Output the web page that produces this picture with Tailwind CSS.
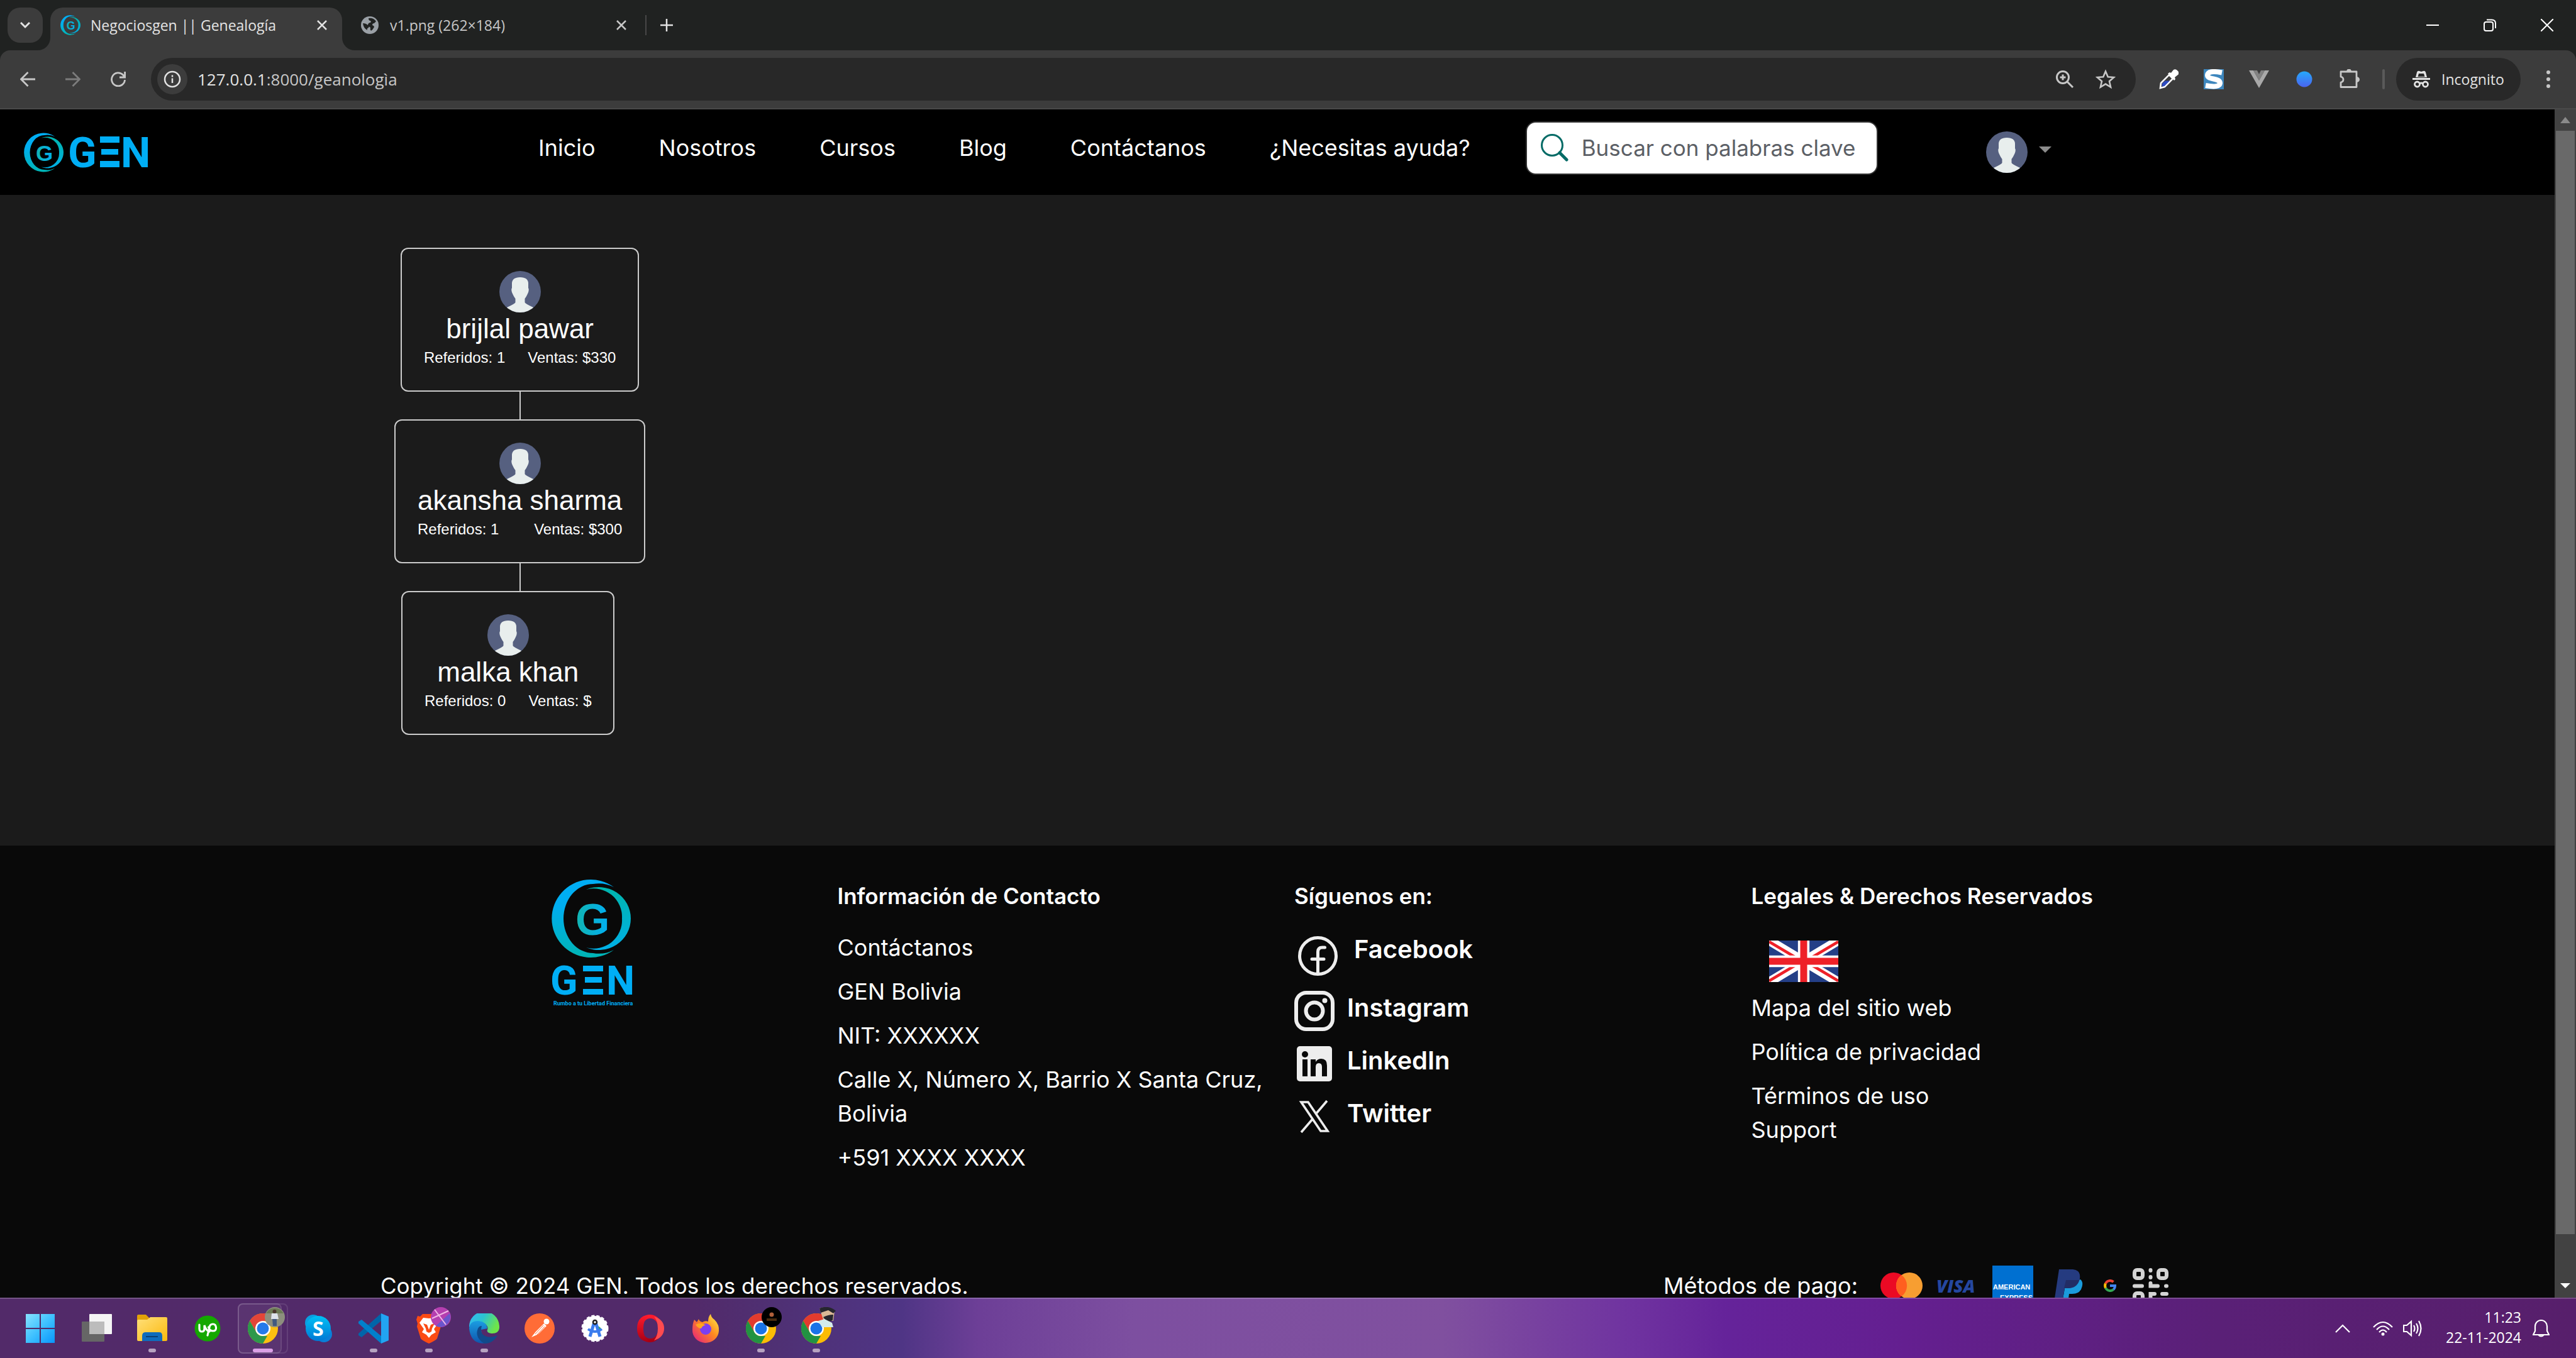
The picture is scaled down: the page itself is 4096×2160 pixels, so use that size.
<!DOCTYPE html>
<html lang="es">
<head>
<meta charset="utf-8">
<title>Negociosgen || Genealogía</title>
<script src="https://cdn.jsdelivr.net/npm/@tailwindcss/browser@4"></script>
</head>
<body class="flex h-screen flex-col overflow-hidden bg-[#202221] font-['Open_Sans',sans-serif] text-white">

<!-- shared symbols -->
<svg class="absolute size-0" aria-hidden="true">
  <defs>
    <linearGradient id="gA" x1="0" y1="0" x2="0" y2="1"><stop offset="0" stop-color="#00aef5"/><stop offset=".35" stop-color="#00aef0"/><stop offset="1" stop-color="#00b5b5"/></linearGradient>
    <linearGradient id="gB" x1="0" y1="0" x2="0" y2="1"><stop offset="0" stop-color="#00b5ad"/><stop offset="1" stop-color="#00b0e6"/></linearGradient>
    <linearGradient id="gC" x1="0" y1="0" x2="1" y2="0"><stop offset="0" stop-color="#12b5b0"/><stop offset="1" stop-color="#00aef5"/></linearGradient>
    <linearGradient id="gWin" gradientUnits="userSpaceOnUse" x1="0" y1="0" x2="48" y2="48"><stop offset="0" stop-color="#8be4ff"/><stop offset=".5" stop-color="#3fc1ff"/><stop offset="1" stop-color="#0693fb"/></linearGradient>
    <linearGradient id="gFold" x1="0" y1="0" x2="1" y2="1"><stop offset="0" stop-color="#ffe07a"/><stop offset="1" stop-color="#fbb90d"/></linearGradient>
    <linearGradient id="gSky" x1="0" y1="0" x2="0" y2="1"><stop offset="0" stop-color="#00c0f5"/><stop offset="1" stop-color="#0078d4"/></linearGradient>
    <linearGradient id="gEdge" x1="0" y1="0" x2="1" y2=".4"><stop offset="0" stop-color="#35b9f5"/><stop offset=".5" stop-color="#2cc3d0"/><stop offset="1" stop-color="#6ee54a"/></linearGradient>
    <linearGradient id="gEdge2" x1="0" y1="0" x2="0" y2="1"><stop offset="0" stop-color="#1b9de2"/><stop offset="1" stop-color="#0f55ac"/></linearGradient>
    <linearGradient id="gOp" x1="0" y1="0" x2="0" y2="1"><stop offset="0" stop-color="#ff1b2d"/><stop offset="1" stop-color="#a70014"/></linearGradient>
    <linearGradient id="gFx" x1="1" y1="0" x2="0" y2="1"><stop offset="0" stop-color="#fff44f"/><stop offset=".45" stop-color="#ff8a1f"/><stop offset="1" stop-color="#e31587"/></linearGradient>
    <linearGradient id="gBall" x1="0" y1="0" x2="0" y2="1"><stop offset="0" stop-color="#25a9fb"/><stop offset="1" stop-color="#4a63f0"/></linearGradient>
    <clipPath id="avClip"><circle cx="33" cy="33" r="33"/></clipPath>
    <symbol id="avatar" viewBox="0 0 66 66">
      <circle cx="33" cy="33" r="33" fill="#566080"/>
      <path clip-path="url(#avClip)" fill="#e8eeed" d="M20 20Q20 10 33 10T46 20V27Q47.500 29 46 34Q43 41 40.500 44V50Q41 52 54 58L58 66H8L12 58Q25 52 25.500 50V44Q23 41 20 34Q18.500 29 20 27Z"/>
    </symbol>
    <symbol id="emblem" viewBox="0 0 126 126">
      <path fill="url(#gA)" d="M99 13A62 62 0 1 0 99 113A54 56 0 0 1 66 118A47 55 0 0 1 66 8A54 56 0 0 1 99 13Z"/>
      <path fill="url(#gB)" d="M55 17A51 50 0 1 1 55 109A45 45 0 0 0 112 63A45 45 0 0 0 55 17Z"/>
      <text x="38" y="89" font-family="Liberation Sans, sans-serif" font-weight="700" font-size="70" fill="url(#gC)">G</text>
    </symbol>
    <symbol id="chrome" viewBox="0 0 48 48">
      <circle cx="24" cy="24" r="24" fill="#fbbc05"/>
      <path fill="#e23b2e" d="M3.200 12L13.600 30L24 12H44.800A24 24 0 0 0 3.200 12Z"/>
      <path fill="#229342" d="M3.200 12L13.600 30Q17 36 24 36H31L24 48A24 24 0 0 1 3.200 12Z"/>
      <circle cx="24" cy="24" r="12" fill="#fff"/><circle cx="24" cy="24" r="9.500" fill="#1a73e8"/>
    </symbol>
  </defs>
</svg>

<!-- tab strip -->
<header class="shrink-0">
  <div class="flex h-20 items-end bg-[#202221]">
    <button aria-label="Buscar pestañas" class="mb-3 ml-3 grid size-14 place-items-center rounded-[20px] bg-[#3c3c3c]"><svg class="h-3.5 w-4" viewBox="0 0 16 14" fill="none" stroke="#e3e3e3" stroke-width="3"><path d="M1 3l7 7 7-7"/></svg></button>
    <div class="relative ml-3 flex h-[68px] w-[464px] items-center rounded-t-[20px] bg-[#3c3c3c] pb-3 pl-4 pr-5">
      <svg class="absolute -left-5 bottom-0 size-5" viewBox="0 0 20 20"><path fill="#3c3c3c" d="M20 0V20H0A20 20 0 0 0 20 0Z"/></svg>
      <svg class="absolute -right-5 bottom-0 size-5" viewBox="0 0 20 20"><path fill="#3c3c3c" d="M0 0V20H20A20 20 0 0 1 0 0Z"/></svg>
      <svg class="size-8"><use href="#emblem"/></svg>
      <span class="ml-4 flex-1 whitespace-nowrap text-[23px] leading-8 text-[#e3e3e3]">Negociosgen || Genealogía</span>
      <button aria-label="Cerrar pestaña" class="grid size-6 place-items-center"><svg class="size-4" viewBox="0 0 16 16" stroke="#e3e3e3" stroke-width="2.500"><path d="M1 1L15 15M15 1L1 15"/></svg></button>
    </div>
    <div class="flex h-[68px] w-[482px] items-center pb-3 pl-7 pr-[26px]">
      <svg class="size-8" viewBox="0 0 32 32"><circle cx="16" cy="16" r="14" fill="#9aa0a6"/><path fill="#202221" d="M5 13q5 0 8 3 3 1 1 4-3 1-2 4-6-3-7-11zM14 5q8-1 12 5l-3 3q-3 0-3 3 3 1 3 3-2 4-5 6-2-2-1-5-3-2-4-4 0-3 3-4 3 0 1-3-3 0-3-4z"/></svg>
      <span class="ml-4 flex-1 whitespace-nowrap text-[23px] leading-8 text-[#c7c7c7]">v1.png (262×184)</span>
      <button aria-label="Cerrar pestaña" class="grid size-6 place-items-center"><svg class="size-4" viewBox="0 0 16 16" stroke="#c7c7c7" stroke-width="2.500"><path d="M1 1L15 15M15 1L1 15"/></svg></button>
    </div>
    <div class="mb-6 h-8 w-0.5 bg-[#474747]"></div>
    <button aria-label="Nueva pestaña" class="mb-[30px] ml-[22px]"><svg class="size-5" viewBox="0 0 20 20" stroke="#e3e3e3" stroke-width="2.500"><path d="M10 0V20M0 10H20"/></svg></button>
    <div class="ml-auto flex items-center gap-[71px] self-center pr-9">
      <button aria-label="Minimizar"><svg class="size-5" viewBox="0 0 20 20" stroke="#fff" stroke-width="2"><path d="M0 10H20"/></svg></button>
      <button aria-label="Restaurar"><svg class="size-5" viewBox="0 0 20 20" stroke="#fff" stroke-width="2" fill="none"><rect x="1" y="5" width="14" height="14" rx="3"/><path d="M5 1.500H13Q19 1.500 19 7V15"/></svg></button>
      <button aria-label="Cerrar"><svg class="size-5" viewBox="0 0 20 20" stroke="#fff" stroke-width="2"><path d="M0 0L20 20M20 0L0 20"/></svg></button>
    </div>
  </div>

  <!-- address bar -->
  <div class="flex h-[94px] items-center rounded-t-2xl border-b-2 border-[#4a4a4a] bg-[#3c3c3c] pl-8 pr-9">
    <div class="flex w-[208px] gap-12">
      <button aria-label="Atrás"><svg class="size-6" viewBox="0 0 24 24" fill="none" stroke="#c7c7c7" stroke-width="2.800"><path d="M24 12H2M12.500 1L1.500 12l11 11"/></svg></button>
      <button aria-label="Adelante"><svg class="size-6" viewBox="0 0 24 24" fill="none" stroke="#7c7c7c" stroke-width="2.800"><path d="M0 12H22M11.500 1l11 11-11 11"/></svg></button>
      <button aria-label="Recargar"><svg class="size-6" viewBox="0 0 24 24" fill="none" stroke="#c7c7c7" stroke-width="2.800"><path d="M22.500 13A10.500 10.500 0 1 1 19.500 5L22 8M22.600 0V9H14"/></svg></button>
    </div>
    <div class="flex h-[68px] flex-1 items-center rounded-full bg-[#282828] pl-2.5 pr-8">
      <span class="grid size-12 place-items-center rounded-full bg-[#3c3c3c]"><svg class="size-7" viewBox="0 0 28 28" fill="none" stroke="#e3e3e3" stroke-width="2.500"><circle cx="14" cy="14" r="12"/><path d="M14 12.500V20M14 7.500V10.500"/></svg></span>
      <p class="ml-4 flex-1 whitespace-nowrap text-[26px] leading-9 text-[#c7c7c7]"><span class="text-[#e3e3e3]">127.0.0.1</span>:8000/geanologìa</p>
      <button aria-label="Zoom"><svg class="size-[30px]" viewBox="0 0 30 30" fill="none" stroke="#c7c7c7" stroke-width="3"><circle cx="12" cy="12" r="9.500"/><path d="M19 19l9 9M12 7.500v9M7.500 12h9"/></svg></button>
      <button aria-label="Favorito" class="ml-[34px]"><svg class="size-8" viewBox="0 0 32 32" fill="none" stroke="#c7c7c7" stroke-width="2.600"><path d="M16 3.500l3.700 8.700 9.400.8-7.100 6.200 2.100 9.300L16 23.600l-8.100 4.900L10 19.200 2.900 13l9.400-.8z"/></svg></button>
    </div>
    <div class="ml-9 flex items-center gap-10">
      <svg class="size-8" viewBox="0 0 32 32"><path d="M3 30l1-8L17 9l6 6L10 28z" fill="#3c3c3c" stroke="#fff" stroke-width="2.600"/><path d="M5.500 27.500l.5-5 5-4h7l-8.500 8.500z" fill="#2d4bc4"/><path d="M15 7l3-2 2 1 4-5q4-2 7 2t0 6l-5 4 1 3-2 2z" fill="#fff"/></svg>
      <svg class="size-8" viewBox="0 0 32 32"><rect width="32" height="32" fill="#3d86bd"/><path d="M29 5.500Q7 1 6 9.500C6 18 26 13 26 22.500Q25 30 3 26" fill="none" stroke="#fff" stroke-width="8"/></svg>
      <svg class="size-8" viewBox="0 0 32 32"><path fill="#a9a9a9" d="M0 2H7L16 18 25 2H32L16 30Z"/><path fill="#828282" d="M7 2H13L16 8 19 2H25L16 18Z"/></svg>
      <svg class="size-8" viewBox="0 0 32 32"><circle cx="16" cy="16" r="12.500" fill="url(#gBall)"/></svg>
      <svg class="size-8" viewBox="0 0 32 32"><path fill="none" stroke="#c7c7c7" stroke-width="2.800" stroke-linejoin="round" d="M2 4H27V28.500H2V21Q6 20 6 16.500T2 12Z"/><path fill="#c7c7c7" d="M11 4a4 4.500 0 0 1 8 0zM27 12a5 4.500 0 0 1 0 9z"/></svg>
    </div>
    <div class="ml-9 h-8 w-1 rounded bg-[#5a5a5a]"></div>
    <button class="ml-[18px] flex h-[68px] w-[198px] items-center gap-4 rounded-full bg-[#282828] pl-6 text-[23px] leading-8 text-[#e3e3e3]">
      <svg class="size-8 shrink-0" viewBox="0 0 32 32" fill="#e3e3e3"><path d="M9 5q1-3 4-2l3 1 3-1q3-1 4 2l2 8H7z"/><path fill="#282828" d="M12 7h8l1.500 5h-11z"/><path d="M2 14H30V17H2z"/><g fill="none" stroke="#e3e3e3" stroke-width="2.800"><circle cx="9.500" cy="24" r="4"/><circle cx="22.500" cy="24" r="4"/><path d="M13 23q3-2 6 0"/></g></svg>Incognito</button>
    <button aria-label="Menú" class="ml-9"><svg class="h-8 w-4" viewBox="0 0 16 32" fill="#c7c7c7"><circle cx="8" cy="5" r="3"/><circle cx="8" cy="16" r="3"/><circle cx="8" cy="27" r="3"/></svg></button>
  </div>
</header>

<!-- web page -->
<div class="flex min-h-0 flex-1">
  <div class="min-w-0 flex-1 overflow-hidden bg-[#1b1b1b] font-[Inter,sans-serif] text-[36px] leading-[54px]">
    <div class="flex h-[136px] items-center bg-black pl-[38px]">
      <a href="#" aria-label="GEN" class="flex w-[818px]">
        <svg class="h-[66px] w-[200px]" viewBox="0 0 200 66">
          <use href="#emblem" x="0" y="2" width="63" height="63"/>
          <g fill="#00aef5" font-family="Roboto, sans-serif" font-weight="700" font-size="67"><text x="70" y="57">G</text>
          <path d="M121 8h31v10h-31zM123 28h27v9h-27zM121 47h31v10h-31z"/>
          <text x="154" y="57">N</text></g>
        </svg>
      </a>
      <nav class="flex gap-[101px] whitespace-nowrap pb-3.5">
        <a href="#">Inicio</a><a href="#">Nosotros</a><a href="#">Cursos</a><a href="#">Blog</a><a href="#">Contáctanos</a><a href="#">¿Necesitas ayuda?</a>
      </nav>
      <label class="mb-3.5 ml-[88px] flex h-[85px] w-[560px] items-center rounded-2xl border-2 border-[#333] bg-white pl-[22px]">
        <svg class="size-11 shrink-0" viewBox="0 0 44 44" fill="none" stroke="#056b66"><circle cx="18" cy="18" r="16.500" stroke-width="3"/><path d="M30 30L41 41" stroke-width="5" stroke-linecap="round"/></svg>
        <input type="search" aria-label="Buscar" placeholder="Buscar con palabras clave" class="ml-[21px] min-w-0 flex-1 bg-transparent text-[35px] text-black outline-none placeholder:text-[#5c6066]">
      </label>
      <button aria-label="Cuenta" class="ml-[172px] flex items-center gap-[18px]"><svg class="size-[66px]"><use href="#avatar"/></svg><svg class="mb-2 h-2.5 w-5" viewBox="0 0 20 10" fill="#8c8c8c"><path d="M0 0H20L10 10Z"/></svg></button>
    </div>

    <!-- referral tree -->
    <main class="pb-[176px] pl-[627px] pt-[84px] font-['Liberation_Sans',sans-serif] text-2xl leading-9">
      <div class="flex w-fit flex-col items-center">
        <div class="rounded-xl border-2 border-[#ccc] px-[35px] pb-[34px] pt-[35px]">
          <svg class="mx-auto size-[66px]"><use href="#avatar"/></svg>
          <h2 class="mb-0.5 text-center text-[44px] leading-[52px]">brijlal pawar</h2>
          <div class="flex justify-between gap-9"><span>Referidos: 1</span><span>Ventas: $330</span></div>
        </div>
        <div class="h-11 w-0.5 bg-[#ccc]"></div>
        <div class="rounded-xl border-2 border-[#ccc] px-[35px] pb-[34px] pt-[35px]">
          <svg class="mx-auto size-[66px]"><use href="#avatar"/></svg>
          <h2 class="mb-0.5 text-center text-[44px] leading-[52px]">akansha sharma</h2>
          <div class="flex justify-between gap-9"><span>Referidos: 1</span><span>Ventas: $300</span></div>
        </div>
        <div class="h-11 w-0.5 bg-[#ccc]"></div>
        <div class="ml-[11px] self-start rounded-xl border-2 border-[#ccc] px-[35px] pb-[34px] pt-[35px]">
          <svg class="mx-auto size-[66px]"><use href="#avatar"/></svg>
          <h2 class="mb-0.5 text-center text-[44px] leading-[52px]">malka khan</h2>
          <div class="flex justify-between gap-9"><span>Referidos: 0</span><span>Ventas: $</span></div>
        </div>
      </div>
    </main>

    <footer class="bg-[#090909] pb-12 pt-[53px]">
      <div class="mx-auto grid max-w-[2906px] grid-cols-4">
        <div class="px-[27px]">
          <svg class="mx-auto h-[206px] w-[132px]" viewBox="0 0 132 206">
            <use href="#emblem" x="2" y="0" width="126" height="126"/>
            <g fill="#00aef5" font-family="Roboto, sans-serif" font-weight="700" font-size="64"><text x="0" y="184">G</text>
            <path d="M52 138h32v9h-32zM55 156h27v9h-27zM52 175h32v9h-32z"/>
            <text x="89" y="184">N</text>
            <text x="5" y="201" font-size="9">Rumbo a tu Libertad Financiera</text></g>
          </svg>
        </div>
        <div class="pl-[27px]">
          <h3 class="mb-7 text-[35px] font-semibold">Información de Contacto</h3>
          <div class="flex flex-col gap-4"><a href="#">Contáctanos</a><p>GEN Bolivia</p><p>NIT: XXXXXX</p><p>Calle X, Número X, Barrio X Santa Cruz, Bolivia</p><p>+591 XXXX XXXX</p></div>
        </div>
        <div class="px-[27px]">
          <h3 class="mb-7 text-[35px] font-semibold">Síguenos en:</h3>
          <ul class="text-[40px] font-semibold leading-[56px]">
            <li class="mb-1.5"><a href="#" class="flex h-20 items-center gap-[26px] pl-1.5"><svg class="size-[63px]" viewBox="0 0 63 63" fill="none" stroke="#ededed"><circle cx="31.500" cy="31.500" r="29" stroke-width="5"/><path stroke-width="5" stroke-linecap="round" d="M31.500 59V25q0-7 7-7h4M22 36.500H41"/></svg><span class="pb-5">Facebook</span></a></li>
            <li><a href="#" class="flex h-[84px] items-center gap-5"><svg class="size-16" viewBox="0 0 64 64" fill="none" stroke="#ededed"><rect x="3" y="3" width="58" height="58" rx="16" stroke-width="6"/><circle cx="32" cy="32" r="13.500" stroke-width="6"/><circle cx="48.500" cy="15.500" r="4" fill="#ededed" stroke="none"/></svg><span class="pb-2.5">Instagram</span></a></li>
            <li><a href="#" class="flex h-[84px] items-center gap-5"><svg class="size-16" viewBox="0 0 64 64"><rect x="4" y="4" width="56" height="56" rx="5" fill="#ededed"/><g fill="#090909"><circle cx="17" cy="17" r="5"/><path d="M13 25h8v27h-8zM26 25h8v4q3-5 9-5 9 0 9 11v17h-8V37q0-6-5-6t-5 6v15h-8z"/></g></svg><span class="pb-2.5">LinkedIn</span></a></li>
            <li><a href="#" class="flex h-[84px] items-center gap-5"><svg class="size-16" viewBox="0 0 64 64" fill="none" stroke="#ededed" stroke-width="3.600"><path d="M11 9H22L53 55H42ZM52 7L35 27M29 36L11 57"/></svg><span class="pb-2.5">Twitter</span></a></li>
          </ul>
        </div>
        <div class="px-[27px]">
          <h3 class="mb-7 whitespace-nowrap text-[35px] font-semibold">Legales &amp; Derechos Reservados</h3>
          <svg class="mb-3.5 ml-7 mt-11 h-[66px] w-[110px]" viewBox="0 0 60 36" preserveAspectRatio="none"><path fill="#243f87" d="M0 0h60v36H0z"/><path d="M0 0L60 36M60 0L0 36" stroke="#fff" stroke-width="8"/><path d="M0 1L27 17M33 19L60 35M60 1L33 17M27 19L0 35" stroke="#ee2128" stroke-width="2.500"/><path d="M30 0V36M0 18H60" stroke="#fff" stroke-width="10"/><path d="M30 0V36M0 18H60" stroke="#ee2128" stroke-width="6"/></svg>
          <div class="flex flex-col gap-4"><a href="#">Mapa del sitio web</a><a href="#">Política de privacidad</a><p><a href="#">Términos de uso</a><br><a href="#">Support</a></p></div>
        </div>
      </div>
      <div class="mx-auto mt-[145px] flex h-16 max-w-[2906px] items-center pl-[27px] pr-9">
        <p class="text-[35px]">Copyright © 2024 GEN. Todos los derechos reservados.</p>
        <div class="ml-auto flex items-center gap-[21px]">
          <span class="mr-[15px]">Métodos de pago:</span>
          <svg class="h-11 w-[67px]" viewBox="0 0 67 44"><circle cx="21" cy="22" r="21" fill="#eb0a24"/><circle cx="46" cy="22" r="21" fill="#f79e31"/><path fill="#ff5f1f" d="M33.500 5a21 21 0 0 1 0 34a21 21 0 0 1 0-34z"/></svg>
          <svg class="h-8 w-[69px]" viewBox="0 0 69 32"><text x="1" y="27" font-family="Open Sans, sans-serif" font-style="italic" font-weight="800" font-size="28" fill="#2547a0">VISA</text></svg>
          <svg class="size-[65px]" viewBox="0 0 65 65"><path fill="#0070d1" d="M0 0h65v65H0z"/><g font-family="Liberation Sans, sans-serif" font-weight="700" fill="#fff" font-size="11"><text x="1" y="38">AMERICAN</text><text x="12" y="55">EXPRESS</text></g></svg>
          <svg class="h-[54px] w-[70px]" viewBox="0 0 70 54"><path fill="#1a9bdc" d="M25 54L30 26 54 17Q60 22 55 33 51 40 41 40H36L34 54Z"/><path fill="#253b80" d="M20 1H42Q55 2 53 16 50 30 36 31H29L25 54H12Z"/><path fill="#222d65" d="M31 18H52Q49 30 36 31H28Z"/></svg>
          <svg class="size-5" viewBox="0 0 20 20" fill="none" stroke-width="4"><path stroke="#ea4335" d="M3 6.500A8 8 0 0 1 15.500 4"/><path stroke="#fbbc05" d="M3 13.500A8 8 0 0 1 3 6.500"/><path stroke="#34a853" d="M15.500 16A8 8 0 0 1 3 13.500"/><path stroke="#4285f4" d="M10 10H18Q18 14 15.500 16"/></svg>
          <svg class="ml-[5px] h-14 w-[57px]" viewBox="0 0 57 56" fill="none" stroke="#d4d4d4" stroke-width="6" stroke-linecap="round"><rect x="3" y="3" width="13" height="13" rx="4"/><rect x="41" y="3" width="13" height="13" rx="4"/><rect x="3" y="40" width="13" height="13" rx="4"/><path d="M28.500 3V4M28.500 14V15M3 28.500H15M28.500 24V28.500H40M53 28.500H54M28.500 53V41H35M47 41H54M42 53H54"/></svg>
        </div>
      </div>
    </footer>
  </div>

  <!-- scrollbar -->
  <div class="flex w-[34px] shrink-0 flex-col items-center bg-[#424242]">
    <svg class="my-3 h-2.5 w-4 shrink-0" viewBox="0 0 16 10" fill="#8a8a8a"><path d="M8 0L16 10H0Z"/></svg>
    <div class="mb-[77px] w-[30px] flex-1 bg-[#696969]"></div>
    <svg class="mb-3.5 h-2.5 w-4 shrink-0" viewBox="0 0 16 10" fill="#fff"><path d="M0 1H16L8 9Z"/></svg>
  </div>
</div>

<!-- taskbar -->
<div class="flex h-24 shrink-0 items-center border-t-2 border-white/20 bg-[linear-gradient(90deg,#522a69_0%,#522a6a_27%,#4f3073_30%,#4f3585_35%,#6d3f97_38%,#7d4fa0_44%,#80509f_56%,#7034a0_63%,#65239a_67%,#641f90_74%,#5a2077_86%,#571f6b_100%)] pl-[22px] pr-[42px]">
  <div class="flex">
    <button aria-label="Inicio" class="grid h-20 w-[88px] place-items-center pr-1"><svg class="size-12" viewBox="0 0 48 48" fill="url(#gWin)"><path d="M1 1h22v22H1zM25 1h22v22H25zM1 25h22v22H1zM25 25h22v22H25z"/></svg></button>
    <button aria-label="Vista de tareas" class="grid h-20 w-[88px] place-items-center"><svg class="size-12" viewBox="0 0 48 48"><rect x="12" y="1" width="36" height="32" rx="1" fill="#f4f4f4"/><rect x="0" y="13" width="36" height="32" rx="1" fill="#666"/><rect x="12" y="13" width="24" height="20" fill="#bcbcbc"/></svg></button>
    <button aria-label="Explorador" class="relative grid h-20 w-[88px] place-items-center"><svg class="size-12" viewBox="0 0 48 48"><path fill="#e3a208" d="M0 4q0-2 2-2H14l5 5V14H0z"/><path fill="url(#gFold)" d="M0 12q0-2 2-2H16l5-4H46q2 0 2 2V42q0 2-2 2H2q-2 0-2-2z"/><path fill="#0f6cbd" d="M8 44V36q0-6 5-6H35q5 0 5 6v8z"/><path stroke="#0c3f73" stroke-width="2" d="M14 37H33"/></svg><i class="absolute bottom-0.5 h-1.5 w-3 rounded-full bg-[#b6a2c0]"></i></button>
    <button aria-label="Upwork" class="grid h-20 w-[88px] place-items-center"><svg class="size-12" viewBox="0 0 48 48"><circle cx="24" cy="24" r="20.500" fill="#14a800"/><path fill="none" stroke="#fff" stroke-width="3.200" stroke-linecap="round" d="M11 18V24q0 5 4 5t4-5V19q3 9 8 10M24 35L27 22q1-5 5.500-5t5 5.500-5 5.500-7-6"/></svg></button>
    <button aria-label="Chrome" class="relative grid h-20 w-[88px] place-items-center"><span class="absolute left-1 top-0 h-20 w-20 rounded-lg border-2 border-white/10"></span><span class="absolute left-1 top-0 h-20 w-[70px] rounded-lg border-2 border-white/10 bg-white/5"></span><svg class="size-12"><use href="#chrome"/></svg><svg class="absolute left-[47px] top-1.5 size-8" viewBox="0 0 32 32"><circle cx="16" cy="16" r="16" fill="#8d8f7e"/><path fill="#6b7a55" d="M2 10A16 16 0 0 1 30 10z"/><path fill="#dde3ec" d="M11 10h9l2 9h-12z"/><circle cx="15.500" cy="7" r="3" fill="#4a382e"/><path fill="#41587f" d="M12 19h7v11h-6z"/></svg><i class="absolute bottom-0.5 h-1.5 w-8 rounded-full bg-[#dba0e6]"></i></button>
    <button aria-label="Skype" class="grid h-20 w-[88px] place-items-center"><svg class="size-12" viewBox="0 0 48 48"><circle cx="16" cy="15" r="13" fill="#0a9fe0"/><circle cx="33" cy="33" r="13" fill="#0a7fd8"/><circle cx="24" cy="24" r="20" fill="url(#gSky)"/><text x="15" y="36" font-family="Open Sans, sans-serif" font-weight="700" font-size="32" fill="#fff">S</text></svg></button>
    <button aria-label="VS Code" class="relative grid h-20 w-[88px] place-items-center"><svg class="size-12" viewBox="0 0 48 48"><path fill="#0065a9" d="M36 0L0 32v3l5 3 31-26z"/><path fill="#0080cc" d="M5 10L0 13v3l36 32V36z"/><path fill="#22a4f2" d="M36 0l12 5v38l-12 5z"/></svg><i class="absolute bottom-0.5 h-1.5 w-3 rounded-full bg-[#b6a2c0]"></i></button>
    <button aria-label="Brave" class="relative grid h-20 w-[88px] place-items-center"><svg class="size-12" viewBox="0 0 48 48"><path fill="#fb4b14" d="M14 1H34l4 4 4-1 2 6-2 6 1 5-6 19q-2 3-13 8-11-5-13-8L5 21l1-5-2-6 2-6 4 1z"/><path fill="#fff" d="M24 8l9-1 6 8-7 10 3 5-7 4-4 5-4-5-7-4 3-5-7-10 6-8z"/><path fill="#fb4b14" d="M15 16l6 2 3 8 3-8 6-2-4 8-1 5-4 2-4-2-1-5z"/></svg><svg class="absolute left-[47px] top-1.5 size-8" viewBox="0 0 32 32"><circle cx="16" cy="16" r="16" fill="#b53fb0"/><path fill="#6b55cc" d="M30 10A16 16 0 0 1 8 30z"/><path stroke="#f1b6e6" stroke-width="2" d="M2 18L28 6M6 4L24 28"/></svg><i class="absolute bottom-0.5 h-1.5 w-3 rounded-full bg-[#b6a2c0]"></i></button>
    <button aria-label="Edge" class="relative grid h-20 w-[88px] place-items-center"><svg class="size-12" viewBox="0 0 48 48"><path fill="url(#gEdge)" d="M0 22A24 24 0 0 1 48 20Q49 32 36 32 27 31 29 26 31 22 26 17 14 9 0 22z"/><path fill="url(#gEdge2)" d="M0 24Q1 12 14 12 28 13 29 24L19 26Q19 38 30 47 3 52 0 24z"/><path fill="#114a8b" d="M20 20Q16 34 28 37 36 39 45 35 38 48 24 48 8 38 14 24 16 20 20 20z"/></svg><i class="absolute bottom-0.5 h-1.5 w-3 rounded-full bg-[#b6a2c0]"></i></button>
    <button aria-label="Postman" class="grid h-20 w-[88px] place-items-center"><svg class="size-12" viewBox="0 0 48 48"><circle cx="24" cy="24" r="24" fill="#ff6c37"/><circle cx="35" cy="13" r="4.500" fill="#fff"/><path fill="#fff" d="M31 16l4 4-13 13-11 5 3-4 4-5z"/><path stroke="#ff6c37" d="M30 19L17 33M32 21L20 34"/></svg></button>
    <button aria-label="Android Studio" class="grid h-20 w-[88px] place-items-center"><svg class="size-12" viewBox="0 0 48 48"><circle cx="24" cy="24" r="20" fill="#fff" stroke="#fff" stroke-width="3" stroke-dasharray="5 3"/><path fill="#34a853" d="M28 20a7 7 0 0 1 6 8h-6z"/><path fill="none" stroke="#3b7ded" stroke-width="5" d="M23 14L16 37M25 14L32 37"/><path fill="none" stroke="#3b7ded" stroke-width="4" d="M13 25q11 8 22 0"/><circle cx="24" cy="14" r="3" fill="#fff" stroke="#222" stroke-width="2.500"/></svg></button>
    <button aria-label="Opera" class="grid h-20 w-[88px] place-items-center"><svg class="size-12" viewBox="0 0 48 48"><ellipse cx="24" cy="24" rx="16" ry="19" fill="none" stroke="url(#gOp)" stroke-width="6"/><path fill="#ff4b4f" d="M30 5Q46 10 46 24T30 43Q36 36 36 24T30 5Z"/><path fill="url(#gOp)" d="M24 2Q3 3 3 24T24 46Q13 40 13 24T24 2Z"/></svg></button>
    <button aria-label="Firefox" class="grid h-20 w-[88px] place-items-center"><svg class="size-12" viewBox="0 0 48 48"><path fill="url(#gFx)" d="M6 10l4 4 3-5q1 4 6 5 4-3 9-1 0-8 4-12 1 6 6 9 8 8 7 18A21 20 0 0 1 3 26Q3 16 6 10z"/><circle cx="24" cy="25" r="9" fill="#7b3ff2"/><path fill="#ffa51f" d="M8 18q8-5 16 1-5 0-7 5-5 0-9-6z"/></svg></button>
    <button aria-label="Chrome" class="relative grid h-20 w-[88px] place-items-center"><svg class="size-12"><use href="#chrome"/></svg><svg class="absolute left-[45px] top-1.5 size-8" viewBox="0 0 32 32"><circle cx="16" cy="16" r="16"/><circle cx="16" cy="12" r="3.500" fill="#b0603a"/><path fill="#4a2c10" d="M8 18h16v4H8z"/></svg><i class="absolute bottom-0.5 h-1.5 w-3 rounded-full bg-[#b6a2c0]"></i></button>
    <button aria-label="Chrome" class="relative grid h-20 w-[88px] place-items-center"><svg class="size-12"><use href="#chrome"/></svg><svg class="absolute left-[45px] top-1.5 size-8" viewBox="0 0 32 32"><path fill="#d9b896" d="M4 2Q16-3 28 6L26 22 10 20z"/><path fill="#26262e" d="M4 2Q18-4 30 6l-4 4-8-5-12 4zM10 16q8-4 16-4l-1 9-9 3z"/><path fill="#d4ecec" d="M2 22l10-3 12 6 2 7H8z"/></svg><i class="absolute bottom-0.5 h-1.5 w-3 rounded-full bg-[#b6a2c0]"></i></button>
  </div>
  <div class="ml-auto flex items-center">
    <svg class="mr-9 h-3.5 w-6" viewBox="0 0 24 14" fill="none" stroke="#fff" stroke-width="2.200"><path d="M1 13L12 2l11 11"/></svg>
    <svg class="mr-4 h-6 w-8" viewBox="0 0 32 24" fill="none" stroke="#fff" stroke-width="2.200"><path d="M1 10Q16-6 31 10M6 14Q16 3 26 14M10 18Q16 11 22 18"/><circle cx="16" cy="21" r="2.500" fill="#fff" stroke="none"/></svg>
    <svg class="h-7 w-8" viewBox="0 0 32 28" fill="none" stroke="#fff" stroke-width="2.200"><path d="M1 9H6L13 3V25L6 19H1ZM17 9q3 5 0 10M21 6q5 8 0 16M25 2q7 12 0 24"/></svg>
    <div class="w-[156px] pb-1 text-right text-[23px] leading-8"><div>11:23</div><div>22-11-2024</div></div>
    <svg class="ml-[18px] h-7 w-[27px]" viewBox="0 0 27 28" fill="none" stroke="#fff" stroke-width="2.200"><path d="M4 18V10.500A9.500 9.500 0 0 1 23 10.500V18L26 24H1ZM9 24q4.500 5 9 0"/></svg>
  </div>
</div>
</body>
</html>
